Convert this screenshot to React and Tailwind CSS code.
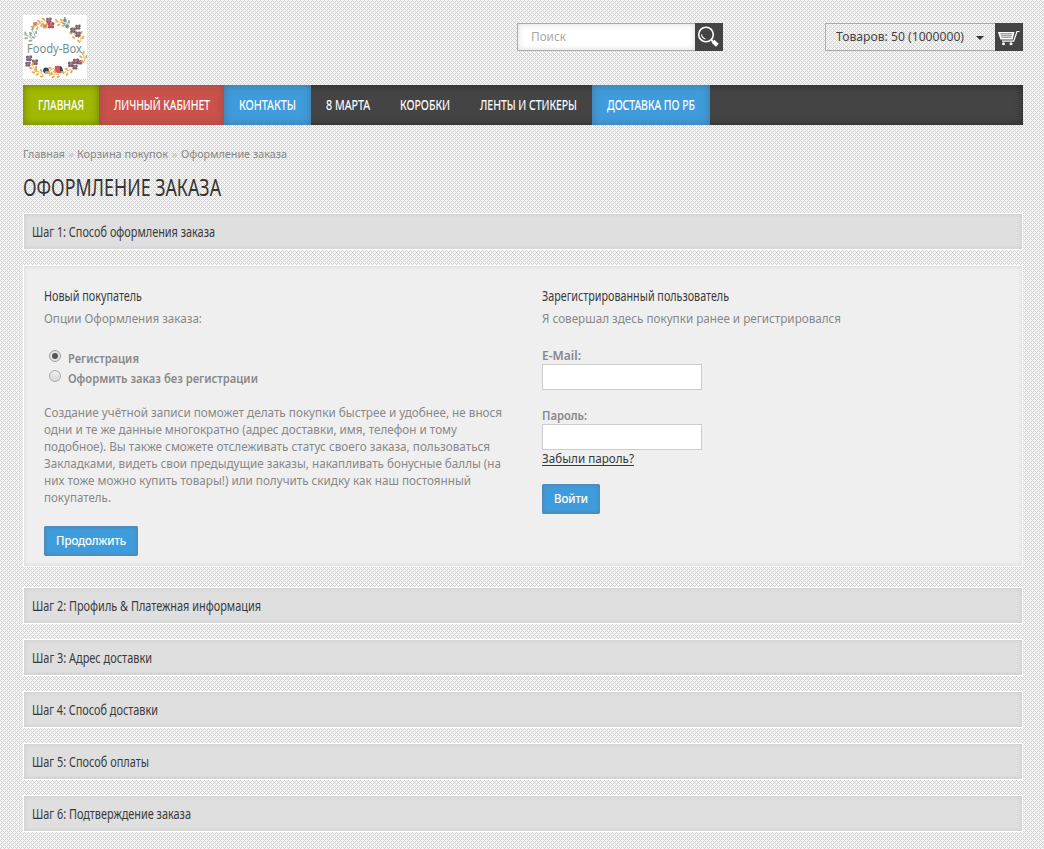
import { useLayoutEffect, useRef, useState } from "react";

// Condenses a line of text horizontally to the given width.
function Fit({ w, children, className = "", inner = "" }) {
  const ref = useRef(null);
  const [scale, setScale] = useState(1);
  useLayoutEffect(() => {
    const natural = ref.current.getBoundingClientRect().width / scale;
    setScale(w / natural);
  }, [w]);
  return (
    <span className={`block whitespace-nowrap ${className}`} style={{ width: w }}>
      <span ref={ref} className={`inline-block origin-left whitespace-nowrap align-top ${inner}`} style={{ transform: `scaleX(${scale})` }}>
        {children}
      </span>
    </span>
  );
}

const nav = [
  ["ГЛАВНАЯ", 46, "w-[76px] bg-[#a0b900] shadow-[inset_0_0_8px_rgba(0,0,0,0.35)]"],
  ["ЛИЧНЫЙ КАБИНЕТ", 96, "w-[125px] bg-[#cb524b] shadow-[inset_0_0_8px_rgba(70,70,70,0.4)]"],
  ["КОНТАКТЫ", 57, "w-[87px] bg-[#3f9cdc] shadow-[inset_0_0_8px_rgba(70,70,70,0.45)]"],
  ["8 МАРТА", 44, "w-[74px]"],
  ["КОРОБКИ", 50, "w-[80px]"],
  ["ЛЕНТЫ И СТИКЕРЫ", 97, "w-[127px]"],
  ["ДОСТАВКА ПО РБ", 88, "w-[118px] bg-[#3f9cdc] shadow-[inset_0_0_8px_rgba(70,70,70,0.45)]"],
];

const steps = [
  ["Шаг 2: Профиль & Платежная информация", 229],
  ["Шаг 3: Адрес доставки", 120],
  ["Шаг 4: Способ доставки", 126],
  ["Шаг 5: Способ оплаты", 117],
  ["Шаг 6: Подтверждение заказа", 159],
];

const about = [
  ["Создание учётной записи поможет делать покупки быстрее и удобнее, не внося", 458],
  ["одни и те же данные многократно (адрес доставки, имя, телефон и тому", 413],
  ["подобное). Вы также сможете отслеживать статус своего заказа, пользоваться", 446],
  ["Закладками, видеть свои предыдущие заказы, накапливать бонусные баллы (на", 457],
  ["них тоже можно купить товары!) или получить скидку как наш постоянный", 427],
  ["покупатель.", 67],
];

function Step({ text, w }) {
  return (
    <div className="flex h-[37px] items-center border border-white bg-[#dfdfdf] pl-2 text-[14.5px] text-[#3a3a3a] shadow-[inset_0_0_5px_rgba(0,0,0,0.1)]">
      <Fit w={w}>{text}</Fit>
    </div>
  );
}

function Flower({ x, y, c = "#666a78", r = 2 }) {
  return (
    <g transform={`translate(${x} ${y})`}>
      <circle cx={-r * 0.8} cy={-r * 0.5} r={r * 0.8} fill={c} />
      <circle cx={r * 0.8} cy={-r * 0.6} r={r * 0.8} fill={c} />
      <circle cx={r * 0.6} cy={r * 0.8} r={r * 0.8} fill={c} />
      <circle cx={-r * 0.7} cy={r * 0.8} r={r * 0.8} fill={c} />
      <circle r={r * 0.65} fill="#d96a60" />
    </g>
  );
}

function Sprig({ x, y, a = 0, c = "#e8ac50" }) {
  return (
    <g transform={`translate(${x} ${y}) rotate(${a})`}>
      <path d="M-5 0Q0 -2 5 0" stroke={c} strokeWidth=".8" fill="none" />
      <ellipse cx="-4" cy="-2" rx="1.9" ry="1" fill={c} transform="rotate(35 -4 -2)" />
      <ellipse cx="-1" cy="2" rx="1.9" ry="1" fill={c} transform="rotate(-35 -1 2)" />
      <ellipse cx="1" cy="-3" rx="1.9" ry="1" fill={c} transform="rotate(35 1 -3)" />
      <ellipse cx="4" cy="2" rx="1.9" ry="1" fill={c} transform="rotate(-35 4 2)" />
    </g>
  );
}

function Logo() {
  return (
    <div className="grid h-16 w-16 place-items-center bg-white">
      <svg viewBox="0 0 64 64" className="col-start-1 row-start-1 h-16 w-16">
        <Sprig x={14} y={11} a={-35} />
        <Sprig x={20} y={7} a={-15} />
        <Flower x={12} y={9} c="#c88a62" r={1.3} />
        <Flower x={26} y={5} r={1.8} c="#7a6570" />
        <Flower x={22} y={11} r={1.6} c="#e0a050" />
        <Flower x={28} y={10} r={2.2} c="#ab5560" />
        <Sprig x={37} y={8} a={10} />
        <Sprig x={43} y={8} a={50} c="#8da49b" />
        <circle cx="42" cy="5.500" r="1.700" fill="#71928c" />
        <circle cx="44" cy="11" r="1.700" fill="#71928c" />
        <Sprig x={10} y={18} a={60} c="#9caf9f" />
        <Sprig x={5} y={22} a={30} c="#9caf9f" />
        <Sprig x={50} y={18} a={55} />
        <Sprig x={57} y={22} a={80} />
        <Flower x={50} y={15} r={1.8} />
        <Flower x={55} y={12} r={1.7} />
        <Flower x={55} y={19} r={1.8} />
        <Flower x={6} y={43} r={2} />
        <Flower x={12} y={47} r={2} />
        <Flower x={5} y={49} r={1.7} />
        <Sprig x={10} y={53} a={60} />
        <Sprig x={16} y={58} a={25} />
        <circle cx="23" cy="55.500" r="2.900" fill="#344360" />
        <Sprig x={28} y={56} a={-40} />
        <path d="M32 51q4 -1 7 1l-1 6q-4 1-6-2z" fill="#d95754" />
        <path d="M37 51q3 1 3 6l-3-1z" fill="#344360" />
        <Sprig x={31} y={60} a={-5} />
        <Sprig x={44} y={57} a={-30} />
        <Flower x={48} y={49} r={2} />
        <Flower x={53} y={46} c="#8e5d68" r={2} />
        <Flower x={52} y={52} r={1.7} />
        <Flower x={57} y={47} r={1.6} />
        <Sprig x={60} y={42} a={70} />
      </svg>
      <div className="col-start-1 row-start-1 pr-px pt-0.5 text-[13px] leading-4 text-[#6d8f8d]">
        <Fit w={55}>Foody-Box</Fit>
      </div>
    </div>
  );
}

function Btn({ children, w, box }) {
  return (
    <button className={`block h-[30px] rounded-[2px] bg-[#3f9cdc] pl-3 text-[12px] leading-[28px] text-white shadow-[inset_0_0_4px_rgba(110,110,110,0.8)] [-webkit-text-stroke:0.2px_white] ${box}`}>
      <Fit w={w} className="text-left">{children}</Fit>
    </button>
  );
}

export default function App() {
  return (
    <div className="h-[849px] overflow-hidden bg-[#f5f5f5] bg-[conic-gradient(at_1px_1px,transparent_75%,#d0d0d0_0),conic-gradient(at_1px_1px,transparent_75%,#d0d0d0_0),conic-gradient(at_1px_1px,transparent_75%,#d4d4d4_0)] bg-[length:4px_4px,4px_4px,2px_2px] bg-[position:0_0,2px_2px,1px_1px] px-[23px] pr-[21px] pt-[15px] font-['Noto_Sans',sans-serif] text-[12px] text-[#888]">
      <header className="flex h-[70px] items-start">
        <Logo />
        <div className="ml-[430px] mt-2 flex h-7 w-[206px]">
          <div className="flex w-[178px] items-center border border-r-0 border-[#aaa] bg-white pl-[13px] text-[12px] text-[#a9a9a9] shadow-[inset_0_0_6px_rgba(0,0,0,0.15)]">
            <Fit w={35}>Поиск</Fit>
          </div>
          <div className="flex w-7 items-center justify-center bg-[#444]">
            <svg viewBox="0 0 24 24" className="-ml-0.5 h-6 w-6" fill="none" stroke="#fff">
              <circle cx="10" cy="9.500" r="7.300" strokeWidth="1.600" />
              <path d="M5.500 9.500q.5 3.500 4 4.500" strokeWidth="1.200" />
              <path d="M15 14.500l2 2" strokeWidth="2" />
              <path d="M17 16.200l4.300 4" strokeWidth="4" />
            </svg>
          </div>
        </div>
        <div className="ml-[102px] mt-2 flex h-7 w-[198px]">
          <div className="flex w-[170px] items-center border border-r-0 border-[#aaa] pl-[10px] text-[12px] text-[#444]">
            <Fit w={128}>Товаров: 50 (1000000)</Fit>
            <svg viewBox="0 0 8 4" className="ml-3 mt-px h-1 w-2"><path d="M0 0h8L4 4z" fill="#333" /></svg>
          </div>
          <div className="flex w-7 items-center justify-center bg-[#444]">
            <svg viewBox="0 0 22 16" className="mt-0.5 h-4 w-[22px]" fill="none" stroke="#fff">
              <path d="M1 2.700h14.500l-1.500 6H3z" strokeWidth="1.600" />
              <path d="M2 4.900h13M3 6.800h11.500" strokeWidth="1.300" />
              <path d="M21.500 1.500h-2.500l-3.300 9.700H4" strokeWidth="1.200" />
              <circle cx="5.500" cy="13.700" r="1.500" fill="#fff" stroke="none" />
              <circle cx="13" cy="13.700" r="1.500" fill="#fff" stroke="none" />
            </svg>
          </div>
        </div>
      </header>

      <nav className="flex h-10 bg-[#444] text-[14px] text-white shadow-[inset_0_0_8px_rgba(0,0,0,0.4)]">
        {nav.map(([t, w, c]) => (
          <a key={t} className={`flex h-10 items-center pb-0.5 pl-[15px] [-webkit-text-stroke:0.15px_white] ${c}`}>
            <Fit w={w}>{t}</Fit>
          </a>
        ))}
      </nav>

      <div className="mt-[21px] flex h-4 text-[11px] leading-4">
        <Fit w={42}>Главная</Fit>
        <span className="w-3 text-center text-[#c0c0c0]">»</span>
        <Fit w={91}>Корзина покупок</Fit>
        <span className="w-[13px] text-center text-[#c0c0c0]">»</span>
        <Fit w={106}>Оформление заказа</Fit>
      </div>

      <h1 className="mt-[9px] mb-[10px] h-8 text-[24px] leading-8 text-[#333]">
        <Fit w={198}>ОФОРМЛЕНИЕ ЗАКАЗА</Fit>
      </h1>

      <Step text="Шаг 1: Способ оформления заказа" w={183} />

      <main className="mt-[15px] mb-5 flex h-[302px] border border-white bg-[#efefef] pl-5 pt-5 leading-[17px] shadow-[inset_0_0_5px_rgba(0,0,0,0.1)]">
        <section className="w-[498px]">
          <h2 className="h-[22px] text-[14.5px] leading-[18px] text-[#3a3a3a]"><Fit w={98}>Новый покупатель</Fit></h2>
          <p className="mt-0.5"><Fit w={158}>Опции Оформления заказа:</Fit></p>
          <div className="mt-[21px] flex h-5 items-center font-semibold">
            <span className="mb-1 ml-[5px] mr-[7px] flex size-3 items-center justify-center rounded-full border border-[#a0a0a0] bg-[#e5e5e5]">
              <span className="size-1.5 rounded-full bg-[#555]" />
            </span>
            <Fit w={71}>Регистрация</Fit>
          </div>
          <div className="flex h-5 items-center font-semibold">
            <span className="mb-1 ml-[5px] mr-[7px] size-3 rounded-full border border-[#aaa] bg-linear-to-b from-[#eee] to-[#d8d8d8]" />
            <Fit w={190}>Оформить заказ без регистрации</Fit>
          </div>
          <p className="mt-4">
            {about.map(([t, w]) => <Fit key={t} w={w}>{t}</Fit>)}
          </p>
          <div className="mt-5">
            <Btn w={70} box="w-[94px]">Продолжить</Btn>
          </div>
        </section>
        <section>
          <h2 className="h-[22px] text-[14.5px] leading-[18px] text-[#3a3a3a]"><Fit w={187}>Зарегистрированный пользователь</Fit></h2>
          <p className="mt-0.5"><Fit w={299}>Я совершал здесь покупки ранее и регистрировался</Fit></p>
          <label className="mt-5 block font-semibold">
            <Fit w={39}>E-Mail:</Fit>
            <input className="block h-[26px] w-40 border border-[#ccc] bg-white" />
          </label>
          <label className="mt-[17px] block font-semibold">
            <Fit w={45}>Пароль:</Fit>
            <input className="block h-[26px] w-40 border border-[#ccc] bg-white" />
          </label>
          <a className="block text-[#3a3a3a]"><Fit w={92} inner="underline underline-offset-2 [text-decoration-skip-ink:none]">Забыли пароль?</Fit></a>
          <div className="mt-[17px]">
            <Btn w={34} box="w-[58px]">Войти</Btn>
          </div>
        </section>
      </main>

      <div className="flex flex-col gap-[15px]">
        {steps.map(([t, w]) => <Step key={t} text={t} w={w} />)}
      </div>
    </div>
  );
}
